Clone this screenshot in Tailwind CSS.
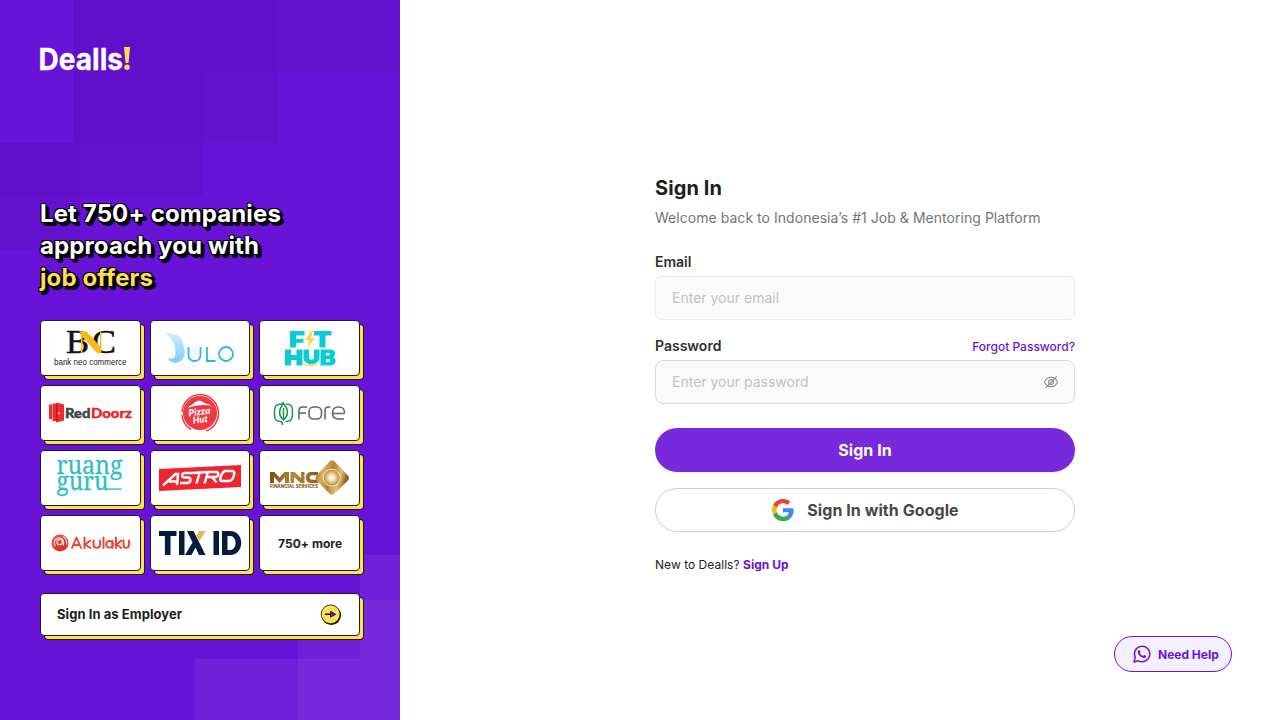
<!DOCTYPE html>
<html lang="en">
<head>
<meta charset="utf-8">
<title>Sign In - Dealls</title>
<script src="https://cdn.jsdelivr.net/npm/@tailwindcss/browser@4"></script>
</head>
<body class="bg-white font-['Inter',sans-serif] text-[#1d1d1d]">
<div class="flex h-[720px] w-[1280px] overflow-hidden">
  <aside class="relative isolate flex w-[400px] shrink-0 flex-col bg-[#6913d8] px-10">
    <svg class="absolute inset-0 -z-10" width="400" height="720" shape-rendering="crispEdges">
      <path fill="#6410cf" d="M277 0h123v72H277zM203 72h74v71h-74zM80 143h123v53H80zM0 196h80v54H0z"/>
      <path fill="#620fca" d="M73 0h204v72h-74v71H73zM0 143h80v53H0z"/>
      <path fill="#711fd9" d="M360 555h40v45h-40zM298 600h62v59h-62zM195 659h103v61H195z"/>
      <path fill="#7729db" d="M360 600h40v120H298v-61h62z"/>
    </svg>

    <svg class="mt-[42px] -ml-1 h-8 w-[104px] shrink-0 overflow-visible" viewBox="-4 0 104 32" font-family="Inter" font-weight="700" font-size="30.500">
      <text x="-1.500" y="27.500" fill="#fff" stroke="#fff" stroke-width=".3" textLength="84.500" lengthAdjust="spacingAndGlyphs">Dealls</text>
      <path d="M84 5h6l-1.500 16h-3z" fill="#ffde52"/><circle cx="87" cy="25.200" r="2.700" fill="#ffde52"/>
    </svg>

    <h1 class="mt-[124px] text-2xl leading-8 font-bold tracking-[0.12px] whitespace-nowrap text-white [text-shadow:-1px_-1px_0_#000,1px_-1px_0_#000,-1px_1px_0_#000,1px_1px_0_#000,2px_2px_0_#000,3px_3px_0_#000,2px_3px_0_#000,3px_2px_0_#000,4px_3px_0_#000,3px_4px_0_#000]">Let 750+ companies<br>approach you with<br><span class="text-[#ffde52]">job offers</span></h1>

    <div class="mt-[26px] grid grid-cols-3 gap-[9px]">
      <div class="flex h-14 items-center justify-center rounded border border-[#1d1d1d] bg-white shadow-[4px_4px_0_-1px_#ffe052,4px_4px_0_0_#1d1d1d]">
        <svg class="h-[54px] w-[98px] shrink-0" viewBox="41 321 98 54">
          <g font-family="Liberation Serif" font-size="33.500" fill="#111" stroke="#111" stroke-width=".5">
            <text x="66" y="353" textLength="23" lengthAdjust="spacingAndGlyphs">B</text>
            <text x="92" y="353" textLength="24" lengthAdjust="spacingAndGlyphs">C</text>
          </g>
          <path d="M79 331.200h7.500l13.500 15v-15h1.300v22h-4L82.500 337v16H81v-19.200z" fill="#fdb913"/>
          <text x="54" y="364.500" font-family="Liberation Sans Narrow, Liberation Sans" font-size="9.500" fill="#222" textLength="72.500" lengthAdjust="spacingAndGlyphs">bank neo commerce</text>
        </svg>
      </div>
      <div class="flex h-14 items-center justify-center rounded border border-[#1d1d1d] bg-white shadow-[4px_4px_0_-1px_#ffe052,4px_4px_0_0_#1d1d1d]">
        <svg class="h-[54px] w-[98px] shrink-0" viewBox="151 321 98 54">
          <defs><linearGradient id="julo" x1="0" y1="0" x2="0" y2="1"><stop stop-color="#d3effe"/><stop offset="1" stop-color="#79cdfa"/></linearGradient></defs>
          <path d="M165 333c10 0 15 2 17 7 1.500 4 2.500 8 2.500 13 0 7-6 10.500-11.500 9.500-3-.5-4.500-2.500-5-5 4 2.500 7.500 1 7.500-4 0-5-.5-9-3.500-13-2-3-5-6-7-7.500z" fill="url(#julo)"/>
          <g fill="none" stroke="#24b8ef" stroke-width="1.800"><path d="M188.500 347v8c0 8 12 8 12 0v-8M207 347v14h8.500"/><circle cx="226" cy="354" r="7"/></g>
        </svg>
      </div>
      <div class="flex h-14 items-center justify-center rounded border border-[#1d1d1d] bg-white shadow-[4px_4px_0_-1px_#ffe052,4px_4px_0_0_#1d1d1d]">
        <svg class="h-[54px] w-[98px] shrink-0" viewBox="261 321 98 54">
          <path fill="#0acbd6" d="M290 331h14.500v4.500H296v3.300h7.500v4H296v4.700h-6zM314 331h17.500v4.500h-6v12h-6v-12H314zM285 349.500h6v5.500h5.500v-5.500h6v16h-6V360H291v5.500h-6zM303.500 349.500h5.500v8c0 3 5 3 5 0v-8h5.500v8c0 9-16 9-16 0z"/>
          <path fill="#0acbd6" fill-rule="evenodd" d="M320.500 349.500h10c5 0 6 5 3 7.500 4 3 2 8.500-3 8.500h-10zM326 353v2.600h3.500v-2.600zM326 359.200v2.800h4v-2.800z"/>
          <path fill="#ffd54b" d="M312 330.500l-7 9.500h4.500l-2 8 7.500-10h-4.500l3-7.500zM302 362.500c4 3 14 3 18 0-3 5-15 5-18 0z"/>
        </svg>
      </div>

      <div class="flex h-14 items-center justify-center rounded border border-[#1d1d1d] bg-white shadow-[4px_4px_0_-1px_#ffe052,4px_4px_0_0_#1d1d1d]">
        <svg class="h-[54px] w-[98px] shrink-0" viewBox="41 386 98 54">
          <path fill="#ee2a2e" d="M49 404.500h3v14.500h-3zM52.500 403.500h3.500v17.500h-3.500zM56.500 402.500l7.500 2v16l-7.500 2z"/>
          <path fill="#c9181f" d="M57.500 404.500l-1.500-1.500v19.500l1.500-1.500z"/><path fill="#fff" d="M58.500 412h1v2.500h-1z"/>
          <g font-family="Lato" font-weight="900" font-size="13.500" stroke-width=".4"><text x="65" y="417.500" fill="#3f4347" stroke="#3f4347" textLength="25.500" lengthAdjust="spacingAndGlyphs">Red</text><text x="91" y="417.500" fill="#ee2328" stroke="#ee2328" textLength="41" lengthAdjust="spacingAndGlyphs">Doorz</text></g>
        </svg>
      </div>
      <div class="flex h-14 items-center justify-center rounded border border-[#1d1d1d] bg-white shadow-[4px_4px_0_-1px_#ffe052,4px_4px_0_0_#1d1d1d]">
        <svg class="h-[54px] w-[98px] shrink-0" viewBox="151 386 98 54">
          <circle cx="200" cy="413" r="17" fill="#ee3a43"/>
          <path d="M182 412a18.500 18.500 0 0 1 18-17.500a18.800 18.800 0 0 1 6 36.500M182 415a19 19 0 0 0 9 14.500" fill="none" stroke="#ee3a43" stroke-width="1.500"/>
          <path d="M187.500 408c3-3.500 5-2.500 7-5.500 3-2.500 6-2.500 9 0 3 2 5 1 8.500 3-8-1-16-1-24.500 2.500z" fill="#fff"/>
          <g font-family="Lato" font-weight="900" font-style="italic" fill="#fff" font-size="9.500" transform="rotate(-7 200 413)"><text x="188.500" y="415" textLength="22" lengthAdjust="spacingAndGlyphs">Pizza</text><text x="192" y="422.800" textLength="15" lengthAdjust="spacingAndGlyphs">Hut</text></g>
        </svg>
      </div>
      <div class="flex h-14 items-center justify-center rounded border border-[#1d1d1d] bg-white shadow-[4px_4px_0_-1px_#ffe052,4px_4px_0_0_#1d1d1d]">
        <svg class="h-[54px] w-[98px] shrink-0" viewBox="261 386 98 54">
          <g fill="none" stroke="#16964a" stroke-width="1.500"><path d="M281.500 404c-5.500 0-7 2-7 9s1.500 8.500 6.500 8.500M285.500 421.500c5.500 0 7-2 7-9s-1.500-8.500-6.500-8.500M281.500 404c1-.2 1.500-.8 2-2M283.500 403.500c-5 6-5 12 0 16.500 5-4.500 5-10.500 0-16.500zM283.500 408v12M280.500 421.500c1.500 0 2 1 2 3.500"/></g>
          <g fill="none" stroke="#65666a" stroke-width="1.600"><path d="M299 419.500v-9c0-2.500 1-3.500 3.500-3.500h4.500M299 413h7M325 419.500v-9c0-2.500 1-3.500 3.500-3.500h2M344.500 413.500H333M344 419h-6c-4 0-5.500-1.500-5.500-5.700 0-4.800 1.800-6.300 6.100-6.300s6 1.500 6 6.500"/><rect x="309" y="407" width="12.500" height="12" rx="4.500"/></g>
        </svg>
      </div>

      <div class="flex h-14 items-center justify-center rounded border border-[#1d1d1d] bg-white shadow-[4px_4px_0_-1px_#ffe052,4px_4px_0_0_#1d1d1d]">
        <svg class="h-[54px] w-[98px] shrink-0" viewBox="41 451 98 54" font-family="Noto Serif, DejaVu Serif Condensed, Liberation Serif" font-size="25.500" fill="#2fbdc9" stroke="#2fbdc9" stroke-width=".25">
          <text x="56.500" y="474.300" textLength="66" lengthAdjust="spacingAndGlyphs">ruang</text>
          <text x="56.500" y="489.800" textLength="52" lengthAdjust="spacingAndGlyphs">guru</text>
          <path d="M108 488.500h13.500v1.200H108z"/>
        </svg>
      </div>
      <div class="flex h-14 items-center justify-center rounded border border-[#1d1d1d] bg-white shadow-[4px_4px_0_-1px_#ffe052,4px_4px_0_0_#1d1d1d]">
        <svg class="h-[54px] w-[98px] shrink-0" viewBox="151 451 98 54">
          <path fill="#ee2632" d="M159 469l82-4v22l-82 4z"/>
          <g fill="none" stroke="#fff" stroke-width="2.500"><path d="M163 485.500l12.500-11.500h2.500l-1 11M169 481.500h8M193 473h-8c-3.500 0-4 4.500-.5 4.500h3.500c4 0 3 5.500-1 5.500h-7M193 473l13.500-1M199.500 473l-3 10.500M204.500 483.500l3.500-11.500h8c4 0 2.500 5-1 5h-8M212 477l4.500 5.500M224 471h8c3 0 2.500 2 2 4-1 4-2 6-5 6h-6c-4 0-3-3-2-5s1-4 4-5"/></g>
        </svg>
      </div>
      <div class="flex h-14 items-center justify-center rounded border border-[#1d1d1d] bg-white shadow-[4px_4px_0_-1px_#ffe052,4px_4px_0_0_#1d1d1d]">
        <svg class="h-[54px] w-[98px] shrink-0" viewBox="261 451 98 54">
          <defs><linearGradient id="gold"><stop stop-color="#7b521b"/><stop offset=".5" stop-color="#b98a35"/><stop offset="1" stop-color="#8a5c1d"/></linearGradient><linearGradient id="dia" x1="0" y1="0" x2="1" y2=".3"><stop stop-color="#8a5e20"/><stop offset=".3" stop-color="#d9b25c"/><stop offset=".55" stop-color="#b3812e"/><stop offset=".8" stop-color="#e5c274"/><stop offset="1" stop-color="#8d6021"/></linearGradient><radialGradient id="orb"><stop stop-color="#fff"/><stop offset=".35" stop-color="#f5e5b8"/><stop offset="1" stop-color="#b28331"/></radialGradient></defs>
          <path fill="url(#gold)" d="M270 483v-11h4.500l5 5.500 5-5.500h4.500v11h-4v-6l-5.500 6-5.500-6v6zM290.500 483v-11h4l6.500 6v-6h3.500v11h-4l-6.500-6v6zM318 472v3.200h-6c-3 0-3 4.500 0 4.500h6v3.300h-7c-7 0-7-11 0-11z"/>
          <text x="270" y="487.800" font-family="Inter" font-weight="800" font-size="4.500" fill="#8a5f25" textLength="48" lengthAdjust="spacingAndGlyphs">FINANCIAL SERVICES</text>
          <path fill="url(#dia)" d="M329.500 461.500q2.500-2.500 5 0l13.500 14q2 2.500 0 5l-13.500 13q-2.500 2.500-5 0l-13-13q-2-2.500 0-5z"/>
          <circle cx="331.700" cy="477.700" r="8.500" fill="url(#orb)" stroke="#f7edcf"/>
        </svg>
      </div>

      <div class="flex h-14 items-center justify-center rounded border border-[#1d1d1d] bg-white shadow-[4px_4px_0_-1px_#ffe052,4px_4px_0_0_#1d1d1d]">
        <svg class="h-[54px] w-[98px] shrink-0" viewBox="41 516 98 54">
          <defs><linearGradient id="aku" x1="0" x2="1" y1="0" y2="1"><stop stop-color="#f6543f"/><stop offset="1" stop-color="#d3261e"/></linearGradient></defs>
          <circle cx="60" cy="543" r="8.500" fill="url(#aku)"/><g fill="none" stroke="#fff" stroke-opacity=".85" stroke-width="1.200"><circle cx="59.700" cy="542" r="2.700"/><path d="M55 546c-3-8 6-11 8.500-5v4.500M63 536.500c3 1.500 3.800 4 3.800 8"/></g>
          <g fill="none" stroke="#f0402f" stroke-width="1.900" stroke-linecap="round" stroke-linejoin="round"><path d="M72 548l4.500-10.500 4.500 10.500M74 545h5M84.500 537.500V548M90.500 540.500l-5.500 4 5.500 3.500M93.500 540.500v4c0 4.500 6.500 4.500 6.500 0v-4M103.500 537.500V548M112.500 541v7M116 537.500V548M121.500 540.500l-5 4 5 3.500M123.500 540.500v4c0 4.500 5.500 4.500 5.500 0v-4"/><circle cx="109.500" cy="544.300" r="3.300"/></g>
        </svg>
      </div>
      <div class="flex h-14 items-center justify-center rounded border border-[#1d1d1d] bg-white shadow-[4px_4px_0_-1px_#ffe052,4px_4px_0_0_#1d1d1d]">
        <svg class="h-[54px] w-[98px] shrink-0" viewBox="151 516 98 54">
          <path fill="#031d3d" d="M159 531h17.500v5h-6v19h-5.600v-19H159zM179 531h5.500v24H179zM187 531h6.500l12 24h-6.500l-3.500-7.500-4 7.500h-6.500l7.500-12.500zM213.500 531h5.500v24h-5.500z"/>
          <path fill="#031d3d" fill-rule="evenodd" d="M222 531h8c15 0 15 24 0 24h-8zM227.500 536v14h2.500c7.500 0 7.500-14 0-14z"/>
          <path fill="#e5b45d" d="M199 531h6.500l-6 10-3.300-5z"/>
        </svg>
      </div>
      <div class="flex h-14 items-center justify-center rounded border border-[#1d1d1d] bg-white pt-0.5 pl-px text-xs font-bold tracking-[0.05px] shadow-[4px_4px_0_-1px_#ffe052,4px_4px_0_0_#1d1d1d]">750+ more</div>
    </div>

    <a class="mt-[22px] flex h-[43px] items-center justify-between rounded border border-[#1d1d1d] bg-white pr-[17px] pl-4 text-sm font-bold shadow-[4px_4px_0_-1px_#ffe052,4px_4px_0_0_#1d1d1d]">
      <span class="text-[13px] tracking-[0.06px]">Sign In as Employer</span>
      <svg class="h-[22px] w-[22px]" viewBox="0 0 22 22"><circle cx="11.300" cy="11.300" r="9.700" fill="#111"/><circle cx="10.600" cy="10.300" r="9.400" fill="#ffe052" stroke="#111" stroke-width=".8"/><path d="M5.500 10.300H12" stroke="#111" stroke-width="1.500" stroke-linecap="round"/><path d="M10.500 7.300l5.200 3-5.200 3z" fill="#6913d8" stroke="#111" stroke-width=".8" stroke-linejoin="round"/></svg>
    </a>
  </aside>

  <main class="relative grow pt-[174px] pl-[255px]">
    <div class="flex w-[420px] flex-col">
      <h2 class="text-xl leading-7 font-bold tracking-[0.1px]">Sign In</h2>
      <p class="mt-1.5 text-sm leading-5 tracking-[0.04px] text-[#757575]">Welcome back to Indonesia’s #1 Job &amp; Mentoring Platform</p>
      <label class="mt-6 text-sm leading-5 font-semibold text-[#303030]">Email</label>
      <div class="mt-1 flex h-11 items-center rounded-md border border-[#ebebeb] bg-[#fafafa] px-4 text-sm text-[#c2c2c2]">Enter your email</div>
      <div class="mt-4 flex items-center justify-between"><label class="text-sm leading-5 font-semibold text-[#303030]">Password</label><a class="pt-0.5 text-xs font-medium text-[#6913d8]">Forgot Password?</a></div>
      <div class="mt-1 flex h-11 items-center justify-between rounded-lg border border-[#d9d9d9] bg-[#fafafa] px-4 text-sm text-[#c2c2c2]">Enter your password
        <svg class="mr-[-1px] h-4 w-4" viewBox="0 0 16 16" fill="none" stroke="#8c8c8c" stroke-width="1.100" stroke-linecap="round"><path d="M1.500 8c2.800-6.300 10.200-6.300 13 0-2.800 6.300-10.200 6.300-13 0z"/><circle cx="8" cy="8" r="2.400"/><path d="M3 13.500L13.500 2.700"/></svg>
      </div>
      <button class="mt-6 h-11 rounded-full bg-[#7829db] font-bold tracking-[0.07px] text-white shadow-[0_2px_0_rgba(0,0,0,0.03)]">Sign In</button>
      <button class="mt-4 flex h-11 items-center justify-center gap-3 rounded-full border border-[#d0d0d0] bg-white font-bold tracking-[0.07px] text-[#474747] shadow-[0_2px_0_rgba(0,0,0,0.015)]">
        <svg class="h-6 w-6" viewBox="-2 -2 52 52"><path fill="#ea4335" d="M24 9.500c3.540 0 6.710 1.220 9.210 3.600l6.850-6.850C35.900 2.380 30.470 0 24 0 14.620 0 6.510 5.380 2.560 13.220l7.980 6.190C12.430 13.720 17.740 9.500 24 9.500z"/><path fill="#4285f4" d="M46.980 24.550c0-1.570-.15-3.090-.38-4.550H24v9.020h12.940c-.58 2.960-2.260 5.480-4.780 7.180l7.730 6c4.510-4.180 7.090-10.360 7.090-17.650z"/><path fill="#fbbc05" d="M10.530 28.590c-.48-1.450-.76-2.990-.76-4.590s.27-3.140.76-4.590l-7.980-6.190C.92 16.460 0 20.120 0 24s.92 7.540 2.560 10.780l7.970-6.190z"/><path fill="#34a853" d="M24 48c6.480 0 11.930-2.130 15.890-5.810l-7.730-6c-2.150 1.450-4.920 2.300-8.160 2.300-6.260 0-11.570-4.220-13.470-9.910l-7.980 6.190C6.510 42.620 14.620 48 24 48z"/></svg>
        <span>Sign In with Google</span>
      </button>
      <p class="mt-6 text-xs leading-[18px] tracking-[0.03px]">New to Dealls? <a class="font-bold text-[#6913d8]">Sign Up</a></p>
    </div>
    <a class="absolute right-12 bottom-12 flex h-9 w-[118px] items-center rounded-full border border-[#6913d8] bg-[#f3f0ff] pl-[17px] text-xs font-bold text-[#6913d8]">
      <svg class="mr-1.5 h-5 w-5 shrink-0" viewBox="0 0 20 20"><path d="M2 18l1.300-4.400A7.700 7.700 0 1 1 6.500 16.800z" fill="none" stroke="#6913d8" stroke-width="1.400" stroke-linejoin="round"/><path d="M7 6c.4-.2.700 0 .9.400l.6 1.400c.1.300 0 .5-.7 1.300.9 1.600 1.900 2.400 3.300 3 .9-1.100 1-1.200 1.400-1l1.500.8c.3.200.3.300.2.700-.3 1.200-1.300 1.600-2.400 1.400-3-.6-5.100-2.500-5.900-4.900-.3-1.200.1-2.500 1.100-3.100z" fill="#6913d8"/></svg>
      <span class="pt-0.5">Need Help</span>
    </a>
  </main>
</div>
</body>
</html>
